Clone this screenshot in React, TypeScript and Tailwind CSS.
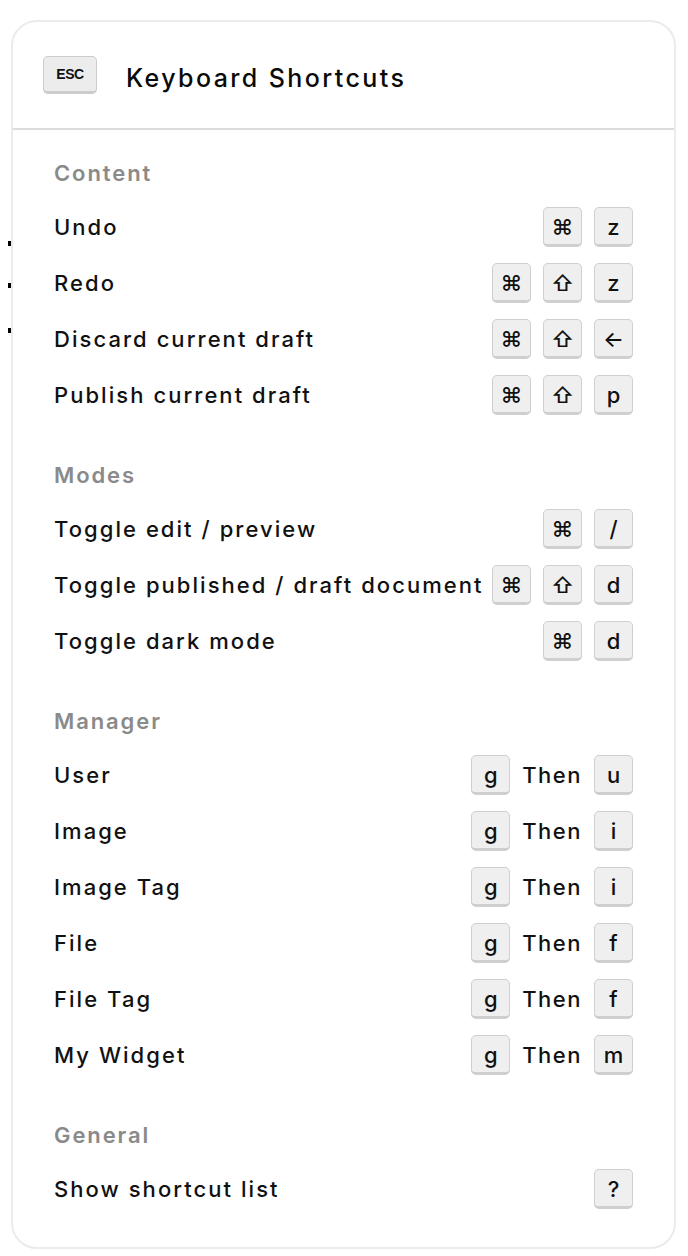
import React from 'react';

type Shortcut = {
  label: string;
  keys: string[];
  then?: boolean;
};

type Section = {
  title: string;
  items: Shortcut[];
};

const sections: Section[] = [
  {
    title: 'Content',
    items: [
      { label: 'Undo', keys: ['⌘', 'z'] },
      { label: 'Redo', keys: ['⌘', '⇧', 'z'] },
      { label: 'Discard current draft', keys: ['⌘', '⇧', '←'] },
      { label: 'Publish current draft', keys: ['⌘', '⇧', 'p'] },
    ],
  },
  {
    title: 'Modes',
    items: [
      { label: 'Toggle edit / preview', keys: ['⌘', '/'] },
      { label: 'Toggle published / draft document', keys: ['⌘', '⇧', 'd'] },
      { label: 'Toggle dark mode', keys: ['⌘', 'd'] },
    ],
  },
  {
    title: 'Manager',
    items: [
      { label: 'User', keys: ['g', 'u'], then: true },
      { label: 'Image', keys: ['g', 'i'], then: true },
      { label: 'Image Tag', keys: ['g', 'i'], then: true },
      { label: 'File', keys: ['g', 'f'], then: true },
      { label: 'File Tag', keys: ['g', 'f'], then: true },
      { label: 'My Widget', keys: ['g', 'm'], then: true },
    ],
  },
  {
    title: 'General',
    items: [{ label: 'Show shortcut list', keys: ['?'] }],
  },
];

function Key({ children }: { children: React.ReactNode }) {
  return (
    <span className="flex h-[40px] w-[39px] items-center justify-center rounded-[5px] border border-b-[3px] border-[#cfcfcf] bg-[#efefef] pt-[1px] font-['Inter','DejaVu_Sans',sans-serif] text-[22px] font-medium leading-none text-[#111]">
      {children}
    </span>
  );
}

export default function App() {
  return (
    <div className="relative min-h-screen bg-white pt-[20px] pl-[11px] pr-[12px] font-['Inter','Liberation_Sans',sans-serif]">
      {/* stray marks left of the panel */}
      <span className="absolute left-[8px] top-[241px] h-[5px] w-[3px] bg-black" />
      <span className="absolute left-[8px] top-[283px] h-[5px] w-[3px] bg-black" />
      <span className="absolute left-[8px] top-[328px] h-[5px] w-[3px] bg-black" />

      <div className="rounded-[26px] border-2 border-[#ebebeb] bg-white">
        {/* Header */}
        <div className="flex h-[108px] items-center gap-[29px] border-b-2 border-[#dcdcdc] pl-[30px]">
          <span className="flex h-[38px] w-[54px] items-center justify-center rounded-[5px] border border-b-[3px] border-[#cccccc] bg-[#ececec] font-['Liberation_Sans',Arial,sans-serif] text-[14px] font-bold leading-none tracking-[-0.5px] text-[#111]">
            ESC
          </span>
          <h2 className="mt-[8px] text-[25px] font-medium tracking-[2.4px] text-[#0a0a0a]">Keyboard Shortcuts</h2>
        </div>

        {/* Sections */}
        <div className="px-[41px] pt-[29px] pb-[30px]">
          {sections.map((section, i) => (
            <div key={section.title} className={i > 0 ? 'mt-[38px]' : ''}>
              <div className="mb-[12px] h-[28px] text-[22px] font-semibold leading-[28px] tracking-[1.9px] text-[#8a8a8a]">
                {section.title}
              </div>
              {section.items.map((item) => (
                <div key={item.label} className="flex h-14 items-center justify-between">
                  <span className="text-[22px] font-medium tracking-[2.05px] text-[#111]">{item.label}</span>
                  <div className="flex items-center gap-3">
                    {item.then ? (
                      <>
                        <Key>{item.keys[0]}</Key>
                        <span className="text-[22px] font-medium tracking-[1.5px] text-[#111]">Then</span>
                        <Key>{item.keys[1]}</Key>
                      </>
                    ) : (
                      item.keys.map((k, idx) => <Key key={idx}>{k}</Key>)
                    )}
                  </div>
                </div>
              ))}
            </div>
          ))}
        </div>
      </div>
    </div>
  );
}
